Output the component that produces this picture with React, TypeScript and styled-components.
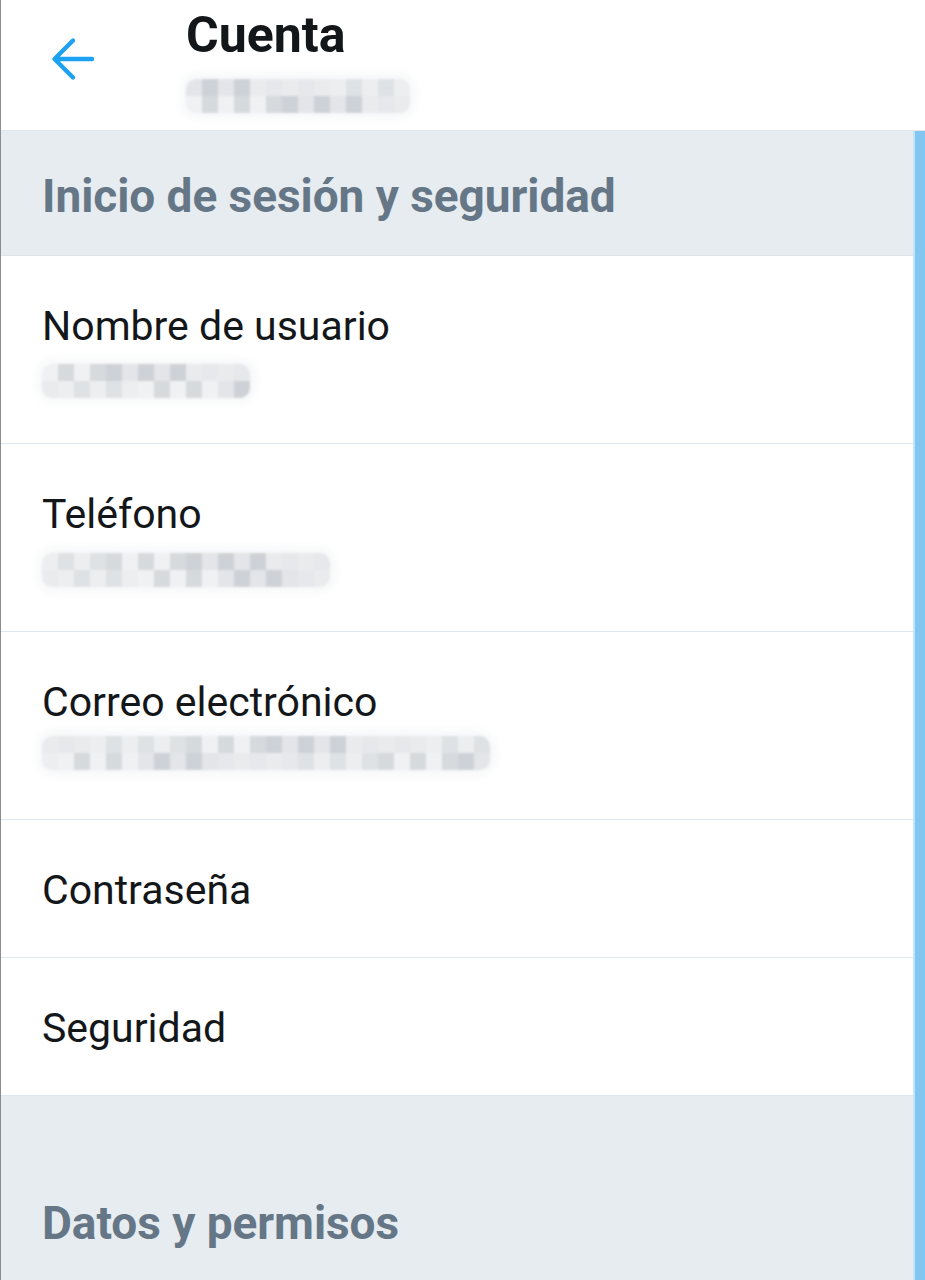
import styled, { createGlobalStyle } from "styled-components";

const GlobalStyle = createGlobalStyle`
	html, body {
		margin: 0;
		padding: 0;
		background: #ffffff;
	}
	body {
		font-family: Roboto, "Noto Sans", "Liberation Sans", sans-serif;
		-webkit-font-smoothing: antialiased;
	}
`;

const Page = styled.div`
	display: flex;
	flex-direction: column;
	min-height: 1280px;
	border-left: 1px solid #8c8c8c;
	background: #ffffff;
	overflow: hidden;
`;

const Header = styled.header`
	display: flex;
	align-items: flex-start;
	height: 130px;
	padding-left: 50px;
	border-bottom: 1px solid #e1e8ed;
	box-sizing: content-box;
`;

const BackButton = styled.button`
	display: flex;
	margin: 37px 0 0;
	padding: 0;
	border: none;
	background: none;
	cursor: pointer;
`;

const TitleBlock = styled.div`
	display: flex;
	flex-direction: column;
	margin-left: 91px;
	padding-top: 7px;
`;

const Title = styled.h1`
	margin: 0;
	font-size: 50px;
	line-height: 56px;
	font-weight: 700;
	color: #14171a;
`;

const Body = styled.div`
	display: flex;
	flex: 1;
`;

const List = styled.div`
	display: flex;
	flex-direction: column;
	flex: 1;
`;

const Scrollbar = styled.div`
	width: 10px;
	border-left: 2px solid #c4e4f9;
	background: #84c6f2;
`;

const SectionHeader = styled.div<{ $top: number; $grow?: boolean }>`
	height: ${(p) => (p.$grow ? "auto" : "125px")};
	flex: ${(p) => (p.$grow ? 1 : "none")};
	box-sizing: border-box;
	padding: ${(p) => p.$top}px 0 0 41px;
	background: #e6ecf0;
	border-bottom: ${(p) => (p.$grow ? "none" : "1px solid #dde3e8")};
`;

const SectionTitle = styled.h2`
	margin: 0;
	font-size: 46px;
	line-height: 56px;
	font-weight: 700;
	letter-spacing: -0.05px;
	color: #657786;
`;

const Row = styled.div`
	display: flex;
	flex-direction: column;
	padding: 46px 0 43px 41px;
	border-bottom: 1px solid #e1e8ed;
`;

const RowTitle = styled.div`
	font-size: 41px;
	line-height: 48px;
	color: #14171a;
`;

const RowValue = styled.div<{ $offset: number }>`
	height: 50px;
	box-sizing: border-box;
	padding-top: ${(p) => p.$offset}px;
`;

const Redact = styled.div<{ $cols: number }>`
	display: grid;
	grid-template-columns: repeat(${(p) => p.$cols}, 16px);
	grid-auto-rows: 17px;
	width: max-content;
	border-radius: 10px;
	overflow: hidden;
	filter: blur(1.2px);
	box-shadow: 0 0 10px 5px #f6f7f8;
`;

const Cell = styled.span<{ $shade: string }>`
	background: ${(p) => p.$shade};
`;

const shades = [
	"#e3e5e8",
	"#d7dadd",
	"#eceef0",
	"#e6e8eb",
	"#ced2d6",
	"#f0f1f3",
	"#dfe2e5",
	"#e9ebed",
];

function Redacted(props: { width: number; seed: number }): JSX.Element {
	const cols = Math.round(props.width / 16);
	const cells = [];
	for (let i = 0; i < cols * 2; i++) {
		const n = (Math.imul(i + 1, 2654435761) + Math.imul(props.seed, 40503)) >>> 0;
		cells.push(<Cell key={i} $shade={shades[(n >>> 13) % shades.length]} />);
	}
	return <Redact $cols={cols}>{cells}</Redact>;
}

function BackArrow(): JSX.Element {
	return (
		<svg width="44" height="44" viewBox="0 0 44 44" fill="none">
			<path
				d="M4 22H41M22 3.5L3.5 22L22 40.5"
				stroke="#1da1f2"
				strokeWidth="4.4"
				strokeLinecap="round"
				strokeLinejoin="round"
			/>
		</svg>
	);
}

const rows: { title: string; value?: number; offset?: number }[] = [
	{ title: "Nombre de usuario", value: 205, offset: 14 },
	{ title: "Teléfono", value: 280, offset: 15 },
	{ title: "Correo electrónico", value: 440, offset: 10 },
	{ title: "Contraseña" },
	{ title: "Seguridad" },
];

export default function App(): JSX.Element {
	return (
		<>
			<GlobalStyle />
			<Page>
				<Header>
					<BackButton aria-label="Atrás">
						<BackArrow />
					</BackButton>
					<TitleBlock>
						<Title>Cuenta</Title>
						<RowValue $offset={16}>
							<Redacted width={230} seed={1} />
						</RowValue>
					</TitleBlock>
				</Header>
				<Body>
					<List>
						<SectionHeader $top={37}>
							<SectionTitle>Inicio de sesión y seguridad</SectionTitle>
						</SectionHeader>
						{rows.map((row, i) => (
							<Row key={row.title}>
								<RowTitle>{row.title}</RowTitle>
								{row.value && (
									<RowValue $offset={row.offset ?? 12}>
										<Redacted width={row.value} seed={i + 2} />
									</RowValue>
								)}
							</Row>
						))}
						<SectionHeader $top={99} $grow>
							<SectionTitle>Datos y permisos</SectionTitle>
						</SectionHeader>
					</List>
					<Scrollbar />
				</Body>
			</Page>
		</>
	);
}
